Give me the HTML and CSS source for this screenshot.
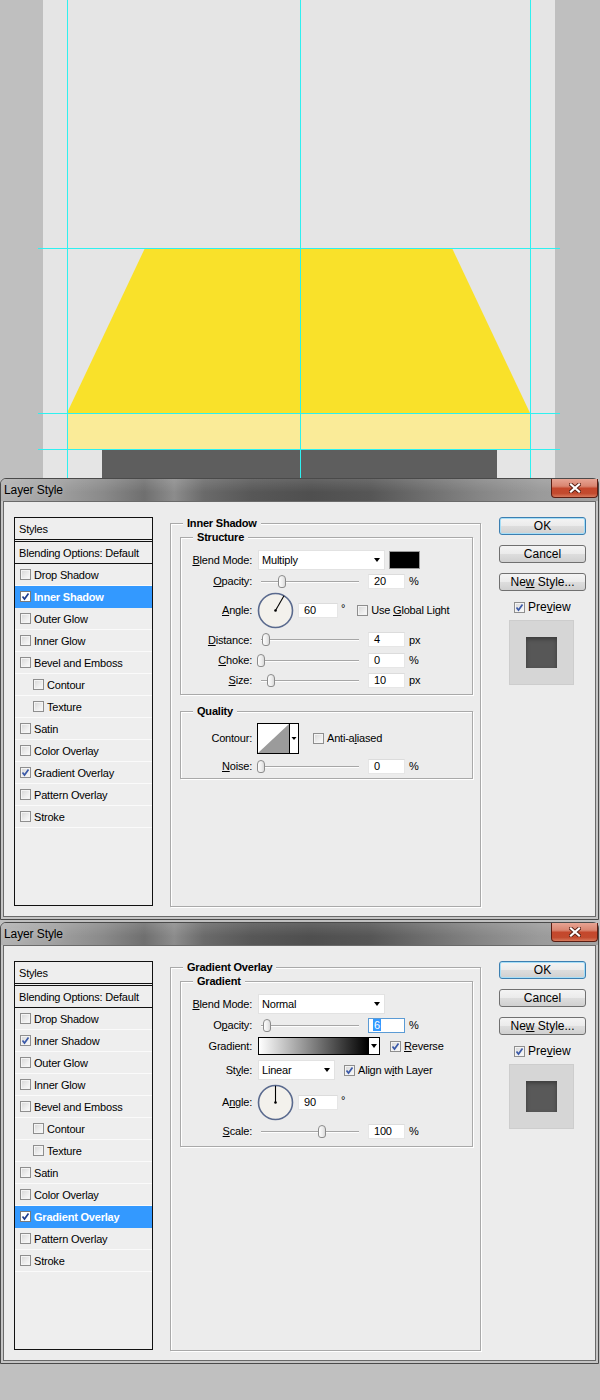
FILE: index.html
```html
<!DOCTYPE html>
<html lang="en">
<head>
<meta charset="utf-8">
<title>Layer Style</title>
<link rel="stylesheet" href="styles.css">
</head>
<body>
<div class="workspace">
  <svg class="artboard" width="600" height="478" viewBox="0 0 600 478" aria-hidden="true">
    <rect x="0" y="0" width="600" height="478" fill="#bfbfbf"/>
    <rect x="43" y="0" width="512" height="478" fill="#e5e5e5"/>
    <polygon points="145,248 452,248 530,413 67,413" fill="#f9e12a"/>
    <rect x="67" y="413" width="463" height="36" fill="#faeb98"/>
    <rect x="102" y="449" width="395" height="29" fill="#5e5e5e"/>
    <g stroke="#2ef0f0" stroke-width="1">
      <line x1="67.5" y1="0" x2="67.5" y2="478"/>
      <line x1="300.5" y1="0" x2="300.5" y2="478"/>
      <line x1="530.5" y1="0" x2="530.5" y2="478"/>
      <line x1="38" y1="248.5" x2="560" y2="248.5"/>
      <line x1="38" y1="413.5" x2="560" y2="413.5"/>
      <line x1="38" y1="449.5" x2="560" y2="449.5"/>
    </g>
  </svg>
</div>

<!-- Dialog 1: Inner Shadow -->
<section class="dialog">
  <header class="titlebar">
    <span class="title">Layer Style</span>
    <button class="close" aria-label="Close">
      <svg width="12" height="10" viewBox="0 0 12 10"><path class="x-out" d="M2 1.5 L10 8.5 M10 1.5 L2 8.5"/><path class="x-in" d="M2 1.5 L10 8.5 M10 1.5 L2 8.5"/></svg>
    </button>
  </header>
  <div class="client">
    <ul class="styles-list">
      <li class="head">Styles</li>
      <li class="blend">Blending Options: Default</li>
      <li><span class="cb"></span>Drop Shadow</li>
      <li class="hl"><span class="cb on"><svg viewBox="0 0 9 9"><path d="M1.5 4.5 L3.5 7 L7.5 1.5"/></svg></span>Inner Shadow</li>
      <li><span class="cb"></span>Outer Glow</li>
      <li><span class="cb"></span>Inner Glow</li>
      <li><span class="cb"></span>Bevel and Emboss</li>
      <li class="sub"><span class="cb"></span>Contour</li>
      <li class="sub"><span class="cb"></span>Texture</li>
      <li><span class="cb"></span>Satin</li>
      <li><span class="cb"></span>Color Overlay</li>
      <li><span class="cb on"><svg viewBox="0 0 9 9"><path d="M1.5 4.5 L3.5 7 L7.5 1.5"/></svg></span>Gradient Overlay</li>
      <li><span class="cb"></span>Pattern Overlay</li>
      <li><span class="cb"></span>Stroke</li>
    </ul>

    <fieldset class="grp outer">
      <legend>Inner Shadow</legend>
      <fieldset class="grp inner structure">
        <legend>Structure</legend>
        <div class="row h22">
          <span class="lbl"><u>B</u>lend Mode:</span>
          <span class="select w127"><span>Multiply</span><i class="caret"></i></span>
          <span class="swatch"></span>
        </div>
        <div class="row h20">
          <span class="lbl"><u>O</u>pacity:</span>
          <span class="slider"><i class="track"></i><i class="thumb" style="left:20px"></i></span>
          <span class="field">20</span><span class="unit">%</span>
        </div>
        <div class="row h38">
          <span class="lbl"><u>A</u>ngle:</span>
          <svg class="dial" width="37" height="37" viewBox="0 0 37 37">
            <circle cx="18.5" cy="18.5" r="17" class="dial-face"/>
            <line x1="18.5" y1="18.5" x2="27" y2="3.8" class="dial-hand"/>
            <circle cx="18.5" cy="18.5" r="1.3" class="dial-dot"/>
          </svg>
          <span class="field wide">60</span><span class="deg">°</span>
          <span class="cb gl"></span><span class="cbl">Use <u>G</u>lobal Light</span>
        </div>
        <div class="row h21">
          <span class="lbl"><u>D</u>istance:</span>
          <span class="slider"><i class="track"></i><i class="thumb" style="left:4px"></i></span>
          <span class="field">4</span><span class="unit">px</span>
        </div>
        <div class="row h20">
          <span class="lbl"><u>C</u>hoke:</span>
          <span class="slider"><i class="track"></i><i class="thumb" style="left:-1px"></i></span>
          <span class="field">0</span><span class="unit">%</span>
        </div>
        <div class="row h20">
          <span class="lbl"><u>S</u>ize:</span>
          <span class="slider"><i class="track"></i><i class="thumb" style="left:9px"></i></span>
          <span class="field">10</span><span class="unit">px</span>
        </div>
      </fieldset>
      <fieldset class="grp inner quality">
        <legend>Quality</legend>
        <div class="row h32">
          <span class="lbl">Contour:</span>
          <svg class="contour" width="42" height="31" viewBox="0 0 42 31">
            <rect x="0.5" y="0.5" width="41" height="30" fill="#fff" stroke="#000"/>
            <polygon points="1,30 32,1 32,30" fill="#9b9b9b"/>
            <line x1="32.5" y1="0.5" x2="32.5" y2="30.5" stroke="#000"/>
            <polygon points="34.5,14 39.5,14 37,17" fill="#000"/>
          </svg>
          <span class="cb aa"></span><span class="cbl">Anti-a<u>l</u>iased</span>
        </div>
        <div class="row h20 gap2">
          <span class="lbl"><u>N</u>oise:</span>
          <span class="slider"><i class="track"></i><i class="thumb" style="left:-1px"></i></span>
          <span class="field">0</span><span class="unit">%</span>
        </div>
      </fieldset>
    </fieldset>

    <div class="actions">
      <button class="btn ok">OK</button>
      <button class="btn">Cancel</button>
      <button class="btn">Ne<u>w</u> Style...</button>
      <div class="preview-toggle"><span class="cb on"><svg viewBox="0 0 9 9"><path d="M1.5 4.5 L3.5 7 L7.5 1.5"/></svg></span><span>Pre<u>v</u>iew</span></div>
      <div class="preview"><div class="preview-swatch"></div></div>
    </div>
  </div>
</section>

<!-- Dialog 2: Gradient Overlay -->
<section class="dialog">
  <header class="titlebar">
    <span class="title">Layer Style</span>
    <button class="close" aria-label="Close">
      <svg width="12" height="10" viewBox="0 0 12 10"><path class="x-out" d="M2 1.5 L10 8.5 M10 1.5 L2 8.5"/><path class="x-in" d="M2 1.5 L10 8.5 M10 1.5 L2 8.5"/></svg>
    </button>
  </header>
  <div class="client">
    <ul class="styles-list">
      <li class="head">Styles</li>
      <li class="blend">Blending Options: Default</li>
      <li><span class="cb"></span>Drop Shadow</li>
      <li><span class="cb on"><svg viewBox="0 0 9 9"><path d="M1.5 4.5 L3.5 7 L7.5 1.5"/></svg></span>Inner Shadow</li>
      <li><span class="cb"></span>Outer Glow</li>
      <li><span class="cb"></span>Inner Glow</li>
      <li><span class="cb"></span>Bevel and Emboss</li>
      <li class="sub"><span class="cb"></span>Contour</li>
      <li class="sub"><span class="cb"></span>Texture</li>
      <li><span class="cb"></span>Satin</li>
      <li><span class="cb"></span>Color Overlay</li>
      <li class="hl"><span class="cb on"><svg viewBox="0 0 9 9"><path d="M1.5 4.5 L3.5 7 L7.5 1.5"/></svg></span>Gradient Overlay</li>
      <li><span class="cb"></span>Pattern Overlay</li>
      <li><span class="cb"></span>Stroke</li>
    </ul>

    <fieldset class="grp outer">
      <legend>Gradient Overlay</legend>
      <fieldset class="grp inner gradient">
        <legend>Gradient</legend>
        <div class="row h22">
          <span class="lbl"><u>B</u>lend Mode:</span>
          <span class="select w127"><span>Normal</span><i class="caret"></i></span>
        </div>
        <div class="row h20">
          <span class="lbl">O<u>p</u>acity:</span>
          <span class="slider"><i class="track"></i><i class="thumb" style="left:5px"></i></span>
          <span class="field focus"><span class="sel">6</span></span><span class="unit">%</span>
        </div>
        <div class="row h22">
          <span class="lbl">Gradient:</span>
          <span class="gradbar"><span class="grad"></span><span class="gradarrow"><i class="caret"></i></span></span>
          <span class="cb on rev"><svg viewBox="0 0 9 9"><path d="M1.5 4.5 L3.5 7 L7.5 1.5"/></svg></span><span class="cbl"><u>R</u>everse</span>
        </div>
        <div class="row h26">
          <span class="lbl">St<u>y</u>le:</span>
          <span class="select w77"><span>Linear</span><i class="caret"></i></span>
          <span class="cb on al"><svg viewBox="0 0 9 9"><path d="M1.5 4.5 L3.5 7 L7.5 1.5"/></svg></span><span class="cbl">Align w<u>i</u>th Layer</span>
        </div>
        <div class="row h38">
          <span class="lbl">A<u>n</u>gle:</span>
          <svg class="dial" width="37" height="37" viewBox="0 0 37 37">
            <circle cx="18.5" cy="18.5" r="17" class="dial-face"/>
            <line x1="18.5" y1="18.5" x2="18.5" y2="1.8" class="dial-hand"/>
            <circle cx="18.5" cy="18.5" r="1.3" class="dial-dot"/>
          </svg>
          <span class="field wide">90</span><span class="deg">°</span>
        </div>
        <div class="row h20">
          <span class="lbl"><u>S</u>cale:</span>
          <span class="slider"><i class="track"></i><i class="thumb" style="left:60px"></i></span>
          <span class="field">100</span><span class="unit">%</span>
        </div>
      </fieldset>
    </fieldset>

    <div class="actions">
      <button class="btn ok">OK</button>
      <button class="btn">Cancel</button>
      <button class="btn">Ne<u>w</u> Style...</button>
      <div class="preview-toggle"><span class="cb on"><svg viewBox="0 0 9 9"><path d="M1.5 4.5 L3.5 7 L7.5 1.5"/></svg></span><span>Pre<u>v</u>iew</span></div>
      <div class="preview"><div class="preview-swatch flat"></div></div>
    </div>
  </div>
</section>
</body>
</html>
```

FILE: styles.css
```css
* { box-sizing: border-box; }
html, body { margin: 0; padding: 0; }
body {
  width: 600px;
  height: 1400px;
  overflow: hidden;
  background: #c0c0c0;
  font-family: "Liberation Sans", Arial, sans-serif;
  font-size: 11px;
  letter-spacing: -0.2px;
  color: #000;
}
u { text-decoration: underline; text-underline-offset: 1px; }

.workspace { height: 478px; }
.artboard { display: block; }

/* ---------- window frame ---------- */
.dialog {
  width: 599px;
  height: 442px;
  border: 1px solid #4a4a4a;
  border-radius: 6px 6px 0 0;
  background: #c4c4c4;
  padding: 0 2px 2px 2px;
  display: flex;
  flex-direction: column;
}
.dialog + .dialog { margin-top: 2px; }

.titlebar {
  flex: none;
  height: 22px;
  margin: 0 -2px;
  padding: 0 0 0 3px;
  display: flex;
  justify-content: space-between;
  align-items: flex-start;
  border-radius: 5px 5px 0 0;
  background:
    linear-gradient(180deg, rgba(255,255,255,0.12) 0%, rgba(255,255,255,0) 60%),
    linear-gradient(90deg, #b3b3b3 0%, #a0a0a0 9%, #8a8a8a 17%, #6f6f6f 24%, #8c8c8c 29%, #6a6a6a 34%, #575757 42%, #4f4f4f 52%, #565656 62%, #6b6b6b 70%, #858585 80%, #9a9a9a 90%, #a3a3a3 100%);
}
.title {
  font-size: 12px;
  line-height: 22px;
  letter-spacing: -0.1px;
  color: #000;
  text-shadow: 0 0 6px rgba(255,255,255,0.35);
}
.close {
  width: 47px;
  height: 19px;
  margin: 0;
  padding: 0;
  border: 1px solid #5b1d12;
  border-top: none;
  border-radius: 0 0 4px 4px;
  background: linear-gradient(180deg, #e7a493 0%, #d98570 40%, #c4472c 52%, #c24a2e 80%, #d7795c 100%);
  display: flex;
  align-items: center;
  justify-content: center;
}
.close svg { display: block; }
.x-out { stroke: #5a2014; stroke-width: 4; stroke-linecap: square; fill: none; }
.x-in { stroke: #fff; stroke-width: 2.2; stroke-linecap: square; fill: none; }

.client {
  flex: 1;
  border: 1px solid #6a6a6a;
  background: #ececec;
  display: flex;
  align-items: flex-start;
  padding: 15px 0 0 10px;
}

/* ---------- styles list ---------- */
.styles-list {
  list-style: none;
  margin: 0;
  padding: 0;
  width: 139px;
  height: 389px;
  flex: none;
  border: 1px solid #111;
  background: #eeeeee;
}
.styles-list li {
  height: 22px;
  display: flex;
  align-items: center;
  padding-left: 5px;
  border-bottom: 1px solid #fafafa;
  white-space: nowrap;
}
.styles-list li.head {
  height: 24px;
  padding-left: 4px;
  border-bottom: 3px double #111;
}
.styles-list li.blend {
  height: 22px;
  padding-left: 4px;
  border-bottom: 1px solid #111;
}
.styles-list li.sub { padding-left: 18px; }
.styles-list li.hl {
  background: #3399ff;
  color: #fff;
  font-weight: bold;
  border-bottom-color: #3399ff;
}
.styles-list li .cb { margin-right: 3px; }

/* ---------- checkbox ---------- */
.cb {
  flex: none;
  width: 11px;
  height: 11px;
  border: 1px solid #8e8e8e;
  background: linear-gradient(135deg, #d6d6d6 0%, #eeeeee 60%, #fbfbfb 100%);
  box-shadow: inset 0 0 0 1px #f4f4f4;
  display: inline-flex;
  align-items: center;
  justify-content: center;
}
.cb svg { width: 9px; height: 9px; display: block; }
.cb svg path { fill: none; stroke: #3a59a8; stroke-width: 1.7; }
.hl .cb { background: #fff; border-color: #7a7a7a; box-shadow: none; }
.hl .cb svg path { stroke: #1f3d8f; }
.cbl { margin-left: 3px; white-space: nowrap; }

/* ---------- group boxes ---------- */
.grp {
  margin: 0;
  padding: 0;
  min-width: 0;
  border: 1px solid #a9a9a9;
  box-shadow: 1px 1px 0 #fff, inset 1px 1px 0 #fff;
}
.grp > legend {
  margin-left: 12px;
  padding: 0 4px;
  line-height: 13px;
  font-weight: bold;
  background: #ececec;
}
.outer {
  flex: none;
  width: 311px;
  height: 390px;
  margin-left: 17px;
}
.inner { margin: 1px 7px 0 9px; }
.structure { padding: 5px 0 4px 0; }
.quality { margin-top: 10px; padding: 4px 0 2px 0; }
.gradient { padding: 5px 0 5px 0; }

/* ---------- rows ---------- */
.row { display: flex; align-items: center; }
.h20 { height: 20px; }
.h21 { height: 21px; }
.h22 { height: 22px; }
.h26 { height: 26px; }
.h32 { height: 32px; }
.h38 { height: 38px; }
.gap2 { margin-top: 2px; }
.lbl {
  flex: none;
  width: 71px;
  margin-right: 6px;
  text-align: right;
  white-space: nowrap;
}

.select {
  flex: none;
  height: 20px;
  background: #fff;
  border: 1px solid #e2e2e2;
  display: flex;
  align-items: center;
  justify-content: space-between;
  padding: 0 4px 0 3px;
}
.w127 { width: 127px; }
.w77 { width: 77px; }
.caret {
  display: block;
  width: 0;
  height: 0;
  border-left: 3.5px solid transparent;
  border-right: 3.5px solid transparent;
  border-top: 4px solid #000;
}
.swatch {
  flex: none;
  width: 31px;
  height: 18px;
  margin-left: 4px;
  background: #000;
  border: 1px solid #9a9a9a;
}

.slider {
  flex: none;
  position: relative;
  width: 104px;
  height: 13px;
  margin-right: 6px;
}
.track {
  position: absolute;
  left: 3px;
  right: 3px;
  top: 6px;
  height: 2px;
  border-top: 1px solid #a6a6a6;
  border-bottom: 1px solid #fdfdfd;
}
.thumb {
  position: absolute;
  top: 0;
  width: 8px;
  height: 13px;
  border: 1px solid #8c8c8c;
  border-radius: 4px 4px 3px 3px;
  background: linear-gradient(90deg, #fdfdfd 0%, #ececec 60%, #d9d9d9 100%);
}

.field {
  flex: none;
  width: 37px;
  height: 15px;
  background: #fff;
  border: 1px solid #e6e6e6;
  border-top-color: #dcdcdc;
  padding-left: 5px;
  line-height: 13px;
  display: flex;
  align-items: center;
}
.field.wide { width: 40px; margin-left: 4px; }
.field.focus { border-color: #5b9bd5; padding-left: 4px; }
.sel { background: #3399ff; color: #fff; padding: 0 1px; line-height: 12px; }
.unit { margin-left: 4px; }
.deg { margin-left: 3px; align-self: flex-start; margin-top: 11px; font-size: 11px; }

.dial { flex: none; margin-left: -1px; display: block; }
.dial-face { fill: #f3f1ec; stroke: #5a6a8e; stroke-width: 1.6; }
.dial-hand { stroke: #000; stroke-width: 1.1; }
.dial-dot { fill: #000; }

.gl { margin-left: 12px; }
.contour { flex: none; margin-left: -1px; display: block; }
.aa { margin-left: 14px; }

.gradbar {
  flex: none;
  width: 122px;
  height: 18px;
  border: 1px solid #000;
  display: flex;
  background: #fff;
}
.grad { flex: 1; background: linear-gradient(90deg, #ffffff 0%, #000000 100%); }
.gradarrow {
  width: 11px;
  border-left: 1px solid #000;
  display: flex;
  align-items: center;
  justify-content: center;
}
.rev { margin-left: 10px; }
.al { margin-left: 9px; }

/* ---------- right column ---------- */
.actions {
  flex: none;
  width: 87px;
  margin-left: 18px;
  display: flex;
  flex-direction: column;
  font-size: 12px;
  letter-spacing: 0;
}
.btn {
  height: 18px;
  margin: 0 0 10px 0;
  padding: 0;
  border: 1px solid #707070;
  border-radius: 3px;
  background: linear-gradient(180deg, #f4f4f4 0%, #ebebeb 48%, #dddddd 52%, #d0d0d0 100%);
  font-family: "Liberation Sans", Arial, sans-serif;
  font-size: 12px;
  line-height: 15px;
  color: #000;
  text-align: center;
}
.btn.ok {
  border-color: #3c7fb1;
  box-shadow: inset 0 0 0 1px #a6def7;
}
.preview-toggle {
  margin-top: -2px;
  height: 16px;
  padding-left: 15px;
  display: flex;
  align-items: center;
  gap: 3px;
}
.preview {
  margin: 5px 0 0 10px;
  width: 65px;
  height: 65px;
  background: #d6d6d6;
  border: 1px solid #cdcdcd;
  display: flex;
  align-items: center;
  justify-content: center;
}
.preview-swatch {
  width: 31px;
  height: 31px;
  background: #575757;
  box-shadow: inset 0 2px 4px rgba(0,0,0,0.35);
}
.preview-swatch.flat { background: #595959; }
```
